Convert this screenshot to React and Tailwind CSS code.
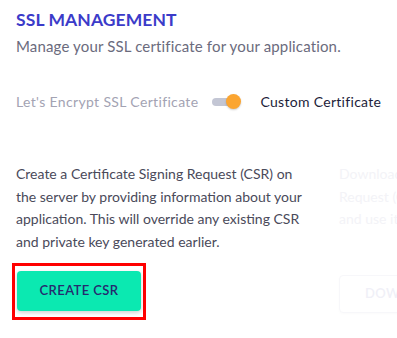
export default function App() {
  return (
    <div className="w-[397px] h-[338px] overflow-hidden bg-white font-['Lato',sans-serif]">
      <div className="pl-4 pt-[8px]">
        <h2 className="text-[17.5px] leading-[24px] font-bold text-[#3b3bc9] tracking-[0.1px]">SSL MANAGEMENT</h2>
        <p className="mt-[4px] text-[15px] leading-[20px] tracking-[0.15px] text-[#6b6b7d]">Manage your SSL certificate for your application.</p>
        <div className="mt-[35px] flex items-center h-[20px]">
          <span className="text-[14px] tracking-[0.35px] text-[#a3a3b3]">Let's Encrypt SSL Certificate</span>
          <div className="ml-[14px] relative w-[30px] h-[15px] shrink-0">
            <div className="absolute left-0 top-[4px] w-[24px] h-[8px] rounded-full bg-[#c3c6d4]"></div>
            <div className="absolute left-[14px] top-0 w-[15px] h-[15px] rounded-full bg-[#fba531] shadow-[0_1px_2px_rgba(0,0,0,0.2)]"></div>
          </div>
          <span className="ml-[18px] text-[14px] tracking-[0.3px] text-[#1d1d3a]">Custom Certificate</span>
        </div>
        <div className="mt-[52px] flex gap-[33px]">
          <div className="w-[290px] shrink-0">
            <p className="text-[14px] leading-[22.5px] text-[#4a4a5a]">
              Create a Certificate Signing Request (CSR) on the server by providing information about your application. This will override any existing CSR and private key generated earlier.
            </p>
            <div className="mt-[10px] -ml-[4px] inline-block border-[3px] border-[#ff0000] px-[2px] pt-[5px] pb-[6px]">
              <button className="w-[124px] h-[40px] rounded-[4px] bg-[#0be9b1] shadow-[0_2px_4px_rgba(0,0,0,0.18)] text-[13px] font-semibold tracking-[0.4px] text-[#252a6e]">
                CREATE CSR
              </button>
            </div>
          </div>
          <div className="w-[280px] shrink-0">
            <p className="text-[14px] leading-[22.5px] text-[#f3f3f7]">
              Download the Certificate Signing<br />Request (CSR) from the server<br />and use it to obtain a certificate.
            </p>
            <div className="mt-[44px] w-[124px] h-[38px] rounded-[4px] border border-[#f7f7fa] shadow-[0_1px_3px_rgba(0,0,0,0.02)] flex items-center pl-[25px] text-[13px] font-semibold tracking-[0.4px] text-[#f0f0f7]">
              DOWNLOAD
            </div>
          </div>
        </div>
      </div>
    </div>
  );
}
